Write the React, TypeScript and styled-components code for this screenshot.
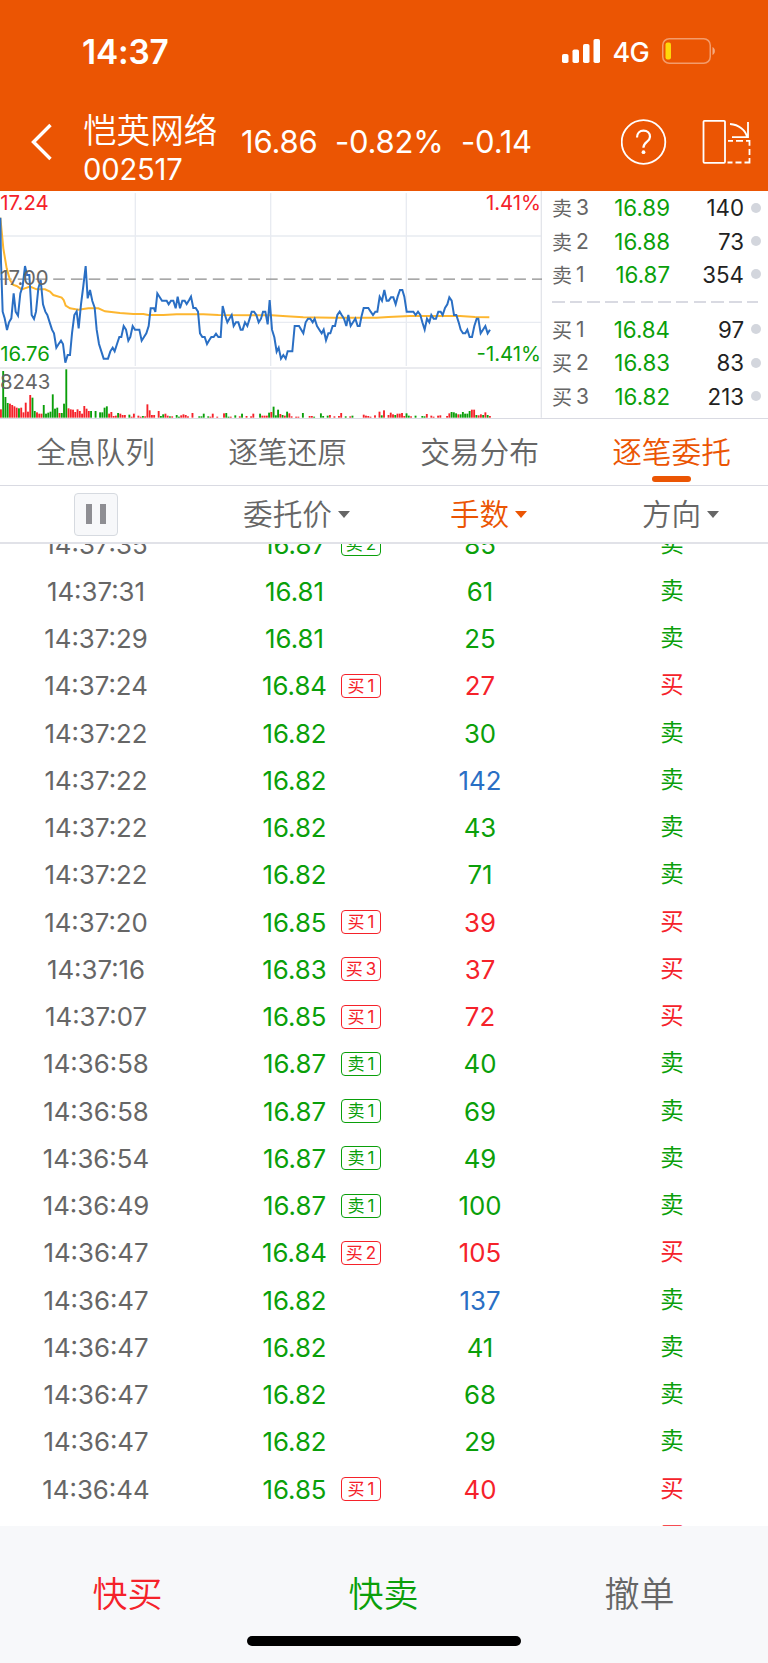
import React from 'react';
import styled, { createGlobalStyle } from 'styled-components';

const ORANGE = '#eb5503';
const GREEN = '#0a9f0a';
const RED = '#f5222a';
const BLUE = '#2a6fc4';
const GREY = '#666666';
const LINE = '#d9dae2';

type Tone = 'green' | 'red' | 'blue' | 'grey';
const tones: Record<Tone, string> = { green: GREEN, red: RED, blue: BLUE, grey: GREY };

const GlobalStyle = createGlobalStyle`
  * { box-sizing: border-box; }
  body {
    margin: 0;
    background: #fff;
    font-family: Inter, 'Noto Sans CJK SC', sans-serif;
    color: ${GREY};
  }
`;

const Screen = styled.main`
  width: 768px;
  height: 1663px;
  display: flex;
  flex-direction: column;
  overflow: hidden;
  white-space: nowrap;
`;

const Top = styled.header`
  height: 191px;
  flex: none;
  background: ${ORANGE};
  color: #fff;
  display: flex;
  flex-direction: column;
`;

const StatusBar = styled.div`
  height: 102px;
  padding: 0 51px 0 82px;
  display: flex;
  align-items: center;
`;

const Clock = styled.span`
  font-size: 33.4px;
  font-weight: 600;
  letter-spacing: -0.2px;
  margin-right: auto;
  padding-top: 2px;
`;

const Network = styled.span`
  font-size: 27px;
  font-weight: 500;
  letter-spacing: -0.7px;
  margin: 2px 13px 0 11px;
`;

const NavBar = styled.div`
  height: 79px;
  padding-left: 30px;
  display: flex;
  align-items: center;
`;

const Stock = styled.div`
  width: 158px;
  margin-left: 29px;
  padding-top: 11px;
  display: flex;
  flex-direction: column;
`;

const StockName = styled.span`
  font-size: 33.6px;
  font-weight: 350;
  line-height: 44px;
`;

const StockCode = styled.span`
  font-size: 29.2px;
  line-height: 33px;
  letter-spacing: -0.2px;
`;

const Quote = styled.div`
  flex: 1;
  display: flex;
  gap: 17.5px;
  padding-top: 1px;
  font-size: 31px;
  line-height: 40px;
  letter-spacing: -0.2px;
`;

const Icon = styled.svg`
  display: block;
  flex: none;
`;

const Market = styled.section`
  height: 228px;
  flex: none;
  display: flex;
  border-bottom: 1px solid ${LINE};
`;

const ChartBox = styled.svg`
  display: block;
  width: 542px;
  height: 227px;
  flex: none;
`;

const Book = styled.div`
  flex: 1;
  padding: 0 7px 0 10px;
  display: flex;
  flex-direction: column;
`;

const BookRow = styled.div`
  height: 33.4px;
  display: grid;
  grid-template-columns: 24px 33px 61px 74px 1fr;
  align-items: center;
  font-size: 22.3px;
`;

const Side = styled.span`
  font-size: 20px;
`;

const Level = styled.span`
  font-size: 21px;
`;

const BookPrice = styled.span`
  color: ${GREEN};
  text-align: right;
`;

const Volume = styled.span`
  color: #222;
  text-align: right;
`;

const Dot = styled.i`
  width: 10px;
  height: 10px;
  margin-left: 6.5px;
  border-radius: 50%;
  background: #d3d6dd;
`;

const Divider = styled.div`
  height: 2px;
  width: 206px;
  margin: 9.5px 0 10px;
  background: repeating-linear-gradient(90deg, ${LINE} 0 12.5px, transparent 12.5px 17.7px);
`;

const Tabs = styled.nav`
  height: 67px;
  flex: none;
  display: grid;
  grid-template-columns: repeat(4, 192px);
  border-bottom: 1px solid ${LINE};
`;

const Tab = styled.div<{ $active?: boolean }>`
  display: flex;
  flex-direction: column;
  align-items: center;
  font-size: 29.7px;
  font-weight: 350;
  line-height: 44px;
  padding: 11px 1px 0 0;
  color: ${(p) => (p.$active ? ORANGE : GREY)};
  &::after {
    content: '';
    width: 39px;
    height: 6px;
    margin-top: 2px;
    border-radius: 3px;
    background: ${(p) => (p.$active ? ORANGE : 'transparent')};
  }
`;

const Columns = styled.div`
  height: 58px;
  flex: none;
  display: grid;
  grid-template-columns: repeat(4, 192px);
  align-items: center;
  justify-items: center;
  border-bottom: 2px solid #e1e2e8;
`;

const PauseButton = styled.button`
  width: 44px;
  height: 43px;
  padding: 0;
  border: 1.5px solid #d6dae0;
  border-radius: 4px;
  background: #f7f8fa;
  display: flex;
  align-items: center;
  justify-content: center;
  gap: 8px;
`;

const PauseBar = styled.i`
  width: 6px;
  height: 20px;
  background: #8e8e93;
`;

const ColumnTitle = styled.div<{ $active?: boolean }>`
  display: flex;
  align-items: center;
  font-size: 29.6px;
  font-weight: 350;
  line-height: 40px;
  padding-right: 2px;
  color: ${(p) => (p.$active ? ORANGE : GREY)};
  &::after {
    content: '';
    border: 6.5px solid transparent;
    border-top: 7px solid currentColor;
    border-bottom: 0;
    margin: 1px -19px 0 6px;
  }
`;

const List = styled.section`
  height: 982px;
  flex: none;
  overflow: hidden;
`;

const Rows = styled.div`
  margin-top: -23.4px;
`;

const Row = styled.div`
  height: 47.25px;
  display: grid;
  grid-template-columns: 192px 192px 192px 192px;
  align-items: center;
  font-size: 25.8px;
`;

const Cell = styled.span<{ $tone?: Tone }>`
  text-align: center;
  color: ${(p) => tones[p.$tone ?? 'grey']};
`;

const PriceCell = styled.div`
  display: grid;
  grid-template-columns: 77px 40px;
  align-items: center;
  justify-items: center;
  gap: 8px;
  padding-left: 64px;
  color: ${GREEN};
`;

const Direction = styled(Cell)`
  font-size: 23.5px;
  line-height: 34px;
  padding-bottom: 1px;
`;

const Badge = styled.span<{ $tone: Tone }>`
  width: 40px;
  height: 24px;
  border: 1px solid ${(p) => tones[p.$tone]};
  border-radius: 4px;
  color: ${(p) => tones[p.$tone]};
  display: flex;
  align-items: center;
  justify-content: center;
  gap: 3px;
  font-size: 17px;
  line-height: 22px;
`;

const Footer = styled.footer`
  flex: 1;
  background: #f7f8fa;
  display: flex;
  flex-direction: column;
  align-items: center;
`;

const Actions = styled.div`
  height: 110px;
  width: 100%;
  padding-top: 42px;
  display: grid;
  grid-template-columns: repeat(3, 1fr);
`;

const Action = styled.span<{ $tone: Tone }>`
  text-align: center;
  font-size: 35px;
  line-height: 52px;
  font-weight: 350;
  padding-right: 1px;
  color: ${(p) => tones[p.$tone]};
`;

const HomeBar = styled.div`
  width: 274px;
  height: 10px;
  border-radius: 5px;
  background: #000;
`;

const priceLine =
  '1,98 3,230 8,380 14,400 21,435 27,412 34,400 41,325 47,380 54,392 61,325 68,303 75,243 81,270 88,270 95,390 102,402 108,380 115,310 122,285 129,358 136,380 142,390 149,412 156,434 162,445 169,488 176,477 183,467 189,477 196,533 203,510 210,510 216,445 223,390 230,379 236,430 243,358 250,303 257,243 263,340 270,315 277,348 284,368 290,434 297,477 304,499 311,521 324,521 331,499 338,488 344,499 351,477 358,456 364,456 371,423 378,434 385,467 391,456 398,423 405,434 418,434 425,467 432,456 439,445 446,423 452,370 462,370 466,381 472,325 486,347 500,347 506,358 513,347 520,347 527,370 533,335 540,370 547,347 554,347 560,357 567,346 573,335 580,369 587,369 594,380 600,445 607,456 614,456 621,477 628,465 634,456 641,456 648,446 655,456 662,456 668,363 675,390 682,412 688,401 695,390 701,423 708,412 715,412 722,434 728,434 735,412 742,423 749,401 755,380 762,380 769,390 776,412 783,401 789,380 796,380 803,418 809,345 816,434 823,457 830,500 836,488 843,521 850,510 857,521 863,499 877,499 884,423 897,423 910,445 917,412 924,401 931,401 938,412 944,401 951,423 958,434 965,445 971,434 978,466 985,445 991,445 998,423 1005,423 1012,390 1019,380 1025,390 1032,401 1039,423 1045,390 1052,423 1059,412 1066,401 1073,423 1079,423 1085,392 1091,369 1105,369 1112,380 1119,390 1126,380 1132,380 1139,335 1146,347 1153,315 1160,347 1166,347 1173,337 1180,337 1187,358 1193,335 1200,315 1207,315 1213,335 1220,380 1240,380 1247,390 1254,380 1261,390 1267,412 1274,434 1281,401 1288,412 1294,390 1301,401 1308,401 1315,380 1322,380 1328,390 1335,369 1342,358 1348,337 1355,347 1362,390 1369,390 1376,412 1382,434 1389,445 1396,445 1402,434 1409,456 1416,456 1423,423 1430,401 1435,401 1442,445 1449,434 1456,423 1463,445 1470,434';

const averageLine =
  '1,98 10,190 20,250 30,285 40,300 50,303 65,313 90,305 110,313 135,313 150,320 160,330 185,338 191,345 197,362 210,370 235,374 265,370 295,370 315,379 360,384 400,387 430,387 445,390 490,390 530,388 610,388 655,390 815,391 860,394 910,397 1000,398 1130,398 1165,396 1230,393 1380,393 1425,396 1468,397';

// Each entry is minute index, direction (r up, g down) and bar height.
const volumes =
  '0r25 1g140 2g62 3g44 4r42 5r38 6r34 7r30 8g28 9r30 10r16 11r45 12r18 13r68 14g60 15g20 16r16 17r12 18r12 19g38 20g12 21g15 22g18 23g70 24g27 25g30 26r14 27g14 28g42 29g145 30r28 31r25 32r24 33r17 34r25 35r20 36r12 37r35 38r27 39r20 40g20 42g20 44g16 45g16 46g30 47g34 48r12 49r17 50r5 51r6 52g14 53r12 54r8 55r8 57g9 58r3 59r12 61r6 62r3 63g5 64r4 65r40 66r22 67r8 68r8 70r20 71g5 72g10 73r12 74r6 75g4 76r4 78g8 79g3 80r7 81r10 82r8 83r4 85r14 88g4 89g4 90g12 92g4 93r3 94r12 96r3 99r13 100g14 101g3 102r3 104g7 106r4 107g12 109r5 111r4 112r12 115g12 116r6 117r6 118r6 119g15 120r17 121g33 122g7 123g24 124r11 125g8 126r6 127g18 128r13 129r4 131r3 132r3 134g14 137r5 138r5 139g3 142g13 143g5 145g6 146r8 148r4 150r5 151r14 153g4 155r4 156g6 161r9 162r6 163r5 164r3 166r7 168r18 169g7 170r22 172r8 173r15 174r10 175g8 176r12 177r12 178r14 179r5 180g13 181g6 182r4 184g6 187g5 188g4 189r11 191r6 192r3 194r6 195r7 198r5 199r13 200g17 201g16 202g13 203r10 204g10 205g17 206g12 207g12 208g20 209r24 210r24 211g8 212r7 213r10 214g8 215r16 216g8 217r5'
    .split(' ')
    .map((s) => {
      const [, i, dir, h] = s.match(/(\d+)([rg])(\d+)/) as RegExpMatchArray;
      return { x: Number(i) * 6.76, h: Number(h), color: dir === 'r' ? '#f5222a' : '#0a9f0a' };
    });

const sells: [string, string][] = [['16.89', '140'], ['16.88', '73'], ['16.87', '354']];
const buys: [string, string][] = [['16.84', '97'], ['16.83', '83'], ['16.82', '213']];

// time, price, badge, lots, lots tone, direction
type Order = [string, string, string, string, Tone, string];
const orders: Order[] = [
  ['14:37:35', '16.87', '卖2', '85', 'green', '卖'],
  ['14:37:31', '16.81', '', '61', 'green', '卖'],
  ['14:37:29', '16.81', '', '25', 'green', '卖'],
  ['14:37:24', '16.84', '买1', '27', 'red', '买'],
  ['14:37:22', '16.82', '', '30', 'green', '卖'],
  ['14:37:22', '16.82', '', '142', 'blue', '卖'],
  ['14:37:22', '16.82', '', '43', 'green', '卖'],
  ['14:37:22', '16.82', '', '71', 'green', '卖'],
  ['14:37:20', '16.85', '买1', '39', 'red', '买'],
  ['14:37:16', '16.83', '买3', '37', 'red', '买'],
  ['14:37:07', '16.85', '买1', '72', 'red', '买'],
  ['14:36:58', '16.87', '卖1', '40', 'green', '卖'],
  ['14:36:58', '16.87', '卖1', '69', 'green', '卖'],
  ['14:36:54', '16.87', '卖1', '49', 'green', '卖'],
  ['14:36:49', '16.87', '卖1', '100', 'green', '卖'],
  ['14:36:47', '16.84', '买2', '105', 'red', '买'],
  ['14:36:47', '16.82', '', '137', 'blue', '卖'],
  ['14:36:47', '16.82', '', '41', 'green', '卖'],
  ['14:36:47', '16.82', '', '68', 'green', '卖'],
  ['14:36:47', '16.82', '', '29', 'green', '卖'],
  ['14:36:44', '16.85', '买1', '40', 'red', '买'],
  ['', '', '', '', 'red', '买'],
];

function Chart() {
  const label = { fontFamily: 'Inter, sans-serif', fontSize: 61 };
  return (
    <ChartBox viewBox="0 18 1626 681" preserveAspectRatio="none">
      <g stroke="#e8ebf1" strokeWidth="4" fill="none">
        <path d="M0 153H1626M0 412H1626M406 24V543M812 24V543M1219 24V543M406 555V698M812 555V698M1219 555V698" />
        <path d="M0 549H1626M1624 18V698" stroke="#e3e5ea" />
      </g>
      <path d="M0 282.500H1626" stroke="#8c8c8c" strokeWidth="4" strokeDasharray="35 18.200" />
      <g>
        {volumes.map((v) => (
          <rect key={v.x} x={v.x} y={698 - v.h} width="5.600" height={v.h} fill={v.color} />
        ))}
      </g>
      <polyline points={averageLine} fill="none" stroke="#fdb62f" strokeWidth="6" />
      <polyline points={priceLine} fill="none" stroke={BLUE} strokeWidth="6" />
      <g style={label}>
        <text x="1" y="74" fill={RED}>17.24</text>
        <text x="1" y="301" fill={GREY}>17.00</text>
        <text x="1" y="528" fill={GREEN}>16.76</text>
        <text x="0" y="612" fill={GREY}>8243</text>
        <text x="1623" y="74" fill={RED} textAnchor="end">1.41%</text>
        <text x="1623" y="528" fill={GREEN} textAnchor="end">-1.41%</text>
      </g>
    </ChartBox>
  );
}

function BookSide({ side, rows, levels }: { side: string; rows: [string, string][]; levels: number[] }) {
  return (
    <>
      {rows.map(([price, volume], i) => (
        <BookRow key={price}>
          <Side>{side}</Side>
          <Level>{levels[i]}</Level>
          <BookPrice>{price}</BookPrice>
          <Volume>{volume}</Volume>
          <Dot />
        </BookRow>
      ))}
    </>
  );
}

export default function App() {
  return (
    <Screen>
      <GlobalStyle />
      <Top>
        <StatusBar>
          <Clock>14:37</Clock>
          <Icon width="39" height="25" viewBox="0 0 39 25" fill="#fff">
            <rect x="0" y="15" width="6.500" height="9" rx="1.800" />
            <rect x="10.500" y="10.500" width="6.500" height="13.500" rx="1.800" />
            <rect x="21" y="5" width="6.500" height="19" rx="1.800" />
            <rect x="31.500" y="0" width="6.500" height="24" rx="1.800" />
          </Icon>
          <Network>4G</Network>
          <Icon width="55" height="26" viewBox="0 0 55 26" fill="none">
            <rect x="0.750" y="0.750" width="47.500" height="24.500" rx="6.500" stroke="#fff" strokeOpacity=".42" strokeWidth="1.500" />
            <rect x="3.500" y="4.500" width="5.500" height="17" rx="2" fill="#ffd60a" />
            <path d="M50.500 9c3.200 1.400 3.200 6.600 0 8z" fill="#fff" fillOpacity=".5" />
          </Icon>
        </StatusBar>
        <NavBar>
          <Icon width="24" height="38" viewBox="0 0 24 38" fill="none" stroke="#fff" strokeWidth="3.400">
            <path d="M20.500 2L3.500 19l17 17" />
          </Icon>
          <Stock>
            <StockName>恺英网络</StockName>
            <StockCode>002517</StockCode>
          </Stock>
          <Quote>
            <span>16.86</span>
            <span>-0.82%</span>
            <span>-0.14</span>
          </Quote>
          <Icon width="147" height="48" viewBox="0 0 147 48" fill="none" stroke="#fff" strokeWidth="1.800">
            <circle cx="22.500" cy="24" r="21.800" />
            <path d="M16 19.500c0-4.200 2.700-6.800 6.500-6.800s6.500 2.400 6.500 6c0 5.300-6.600 5.200-6.600 11" strokeWidth="2.200" />
            <circle cx="22.500" cy="34.200" r="1.900" fill="#fff" stroke="none" />
            <rect x="82.500" y="2.800" width="21.500" height="42" rx="1" />
            <path d="M109 6c9 .7 15.500 6 17.300 13.500M127 4v15.200h-16" />
            <path d="M107 22.800h5M115 22.800h7M125 22.800h3.500v5M128.500 31v6M128.500 40v4.500h-5M120.500 44.500h-6M111.500 44.500h-5" />
          </Icon>
        </NavBar>
      </Top>

      <Market>
        <Chart />
        <Book>
          <BookSide side="卖" rows={sells} levels={[3, 2, 1]} />
          <Divider />
          <BookSide side="买" rows={buys} levels={[1, 2, 3]} />
        </Book>
      </Market>

      <Tabs>
        <Tab>全息队列</Tab>
        <Tab>逐笔还原</Tab>
        <Tab>交易分布</Tab>
        <Tab $active>逐笔委托</Tab>
      </Tabs>

      <Columns>
        <PauseButton aria-label="pause">
          <PauseBar />
          <PauseBar />
        </PauseButton>
        <ColumnTitle>委托价</ColumnTitle>
        <ColumnTitle $active>手数</ColumnTitle>
        <ColumnTitle>方向</ColumnTitle>
      </Columns>

      <List>
        <Rows>
          {orders.map(([time, price, badge, lots, tone, dir], i) => (
            <Row key={i}>
              <Cell>{time}</Cell>
              <PriceCell>
                <span>{price}</span>
                {badge && (
                  <Badge $tone={badge[0] === '买' ? 'red' : 'green'}>
                    <span>{badge[0]}</span>
                    <span>{badge[1]}</span>
                  </Badge>
                )}
              </PriceCell>
              <Cell $tone={tone}>{lots}</Cell>
              <Direction $tone={dir === '买' ? 'red' : 'green'}>{dir}</Direction>
            </Row>
          ))}
        </Rows>
      </List>

      <Footer>
        <Actions>
          <Action $tone="red">快买</Action>
          <Action $tone="green">快卖</Action>
          <Action $tone="grey">撤单</Action>
        </Actions>
        <HomeBar />
      </Footer>
    </Screen>
  );
}
